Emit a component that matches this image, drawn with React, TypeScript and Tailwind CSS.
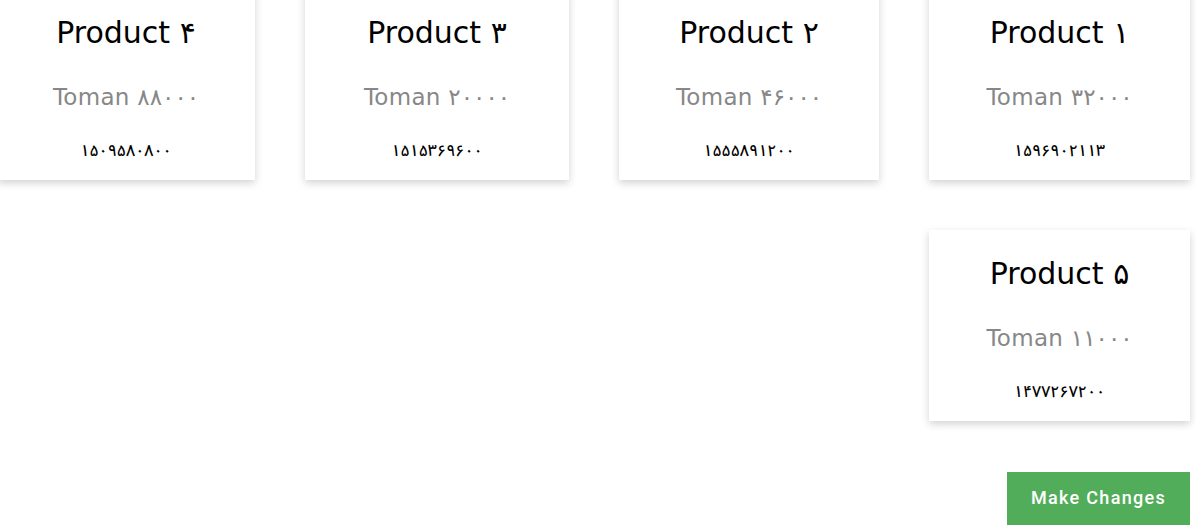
import React from 'react';

type Product = { id: number; title: string; price: string; date: string; w: string };

const row1: Product[] = [
  { id: 1, title: 'Product ۱', price: 'Toman ۳۲۰۰۰', date: '۱۵۹۶۹۰۲۱۱۳', w: 'w-[261px]' },
  { id: 2, title: 'Product ۲', price: 'Toman ۴۶۰۰۰', date: '۱۵۵۵۸۹۱۲۰۰', w: 'w-[260px]' },
  { id: 3, title: 'Product ۳', price: 'Toman ۲۰۰۰۰', date: '۱۵۱۵۳۶۹۶۰۰', w: 'w-[264px]' },
  { id: 4, title: 'Product ۴', price: 'Toman ۸۸۰۰۰', date: '۱۵۰۹۵۸۰۸۰۰', w: 'w-[258px]' },
];

const row2: Product[] = [
  { id: 5, title: 'Product ۵', price: 'Toman ۱۱۰۰۰', date: '۱۴۷۷۲۶۷۲۰۰', w: 'w-[261px]' },
];

const ProductCard = ({ p }: { p: Product }) => (
  <div className={`${p.w} shrink-0 h-[191px] bg-white shadow-[0_3px_8px_rgba(0,0,0,0.18)] flex flex-col items-center pt-[26px]`}>
    <h2 className="text-[30px] leading-[36px] text-black" dir="ltr">{p.title}</h2>
    <div className="mt-[33px] text-[23px] leading-[26px] tracking-[0.3px] text-[#878787]" dir="ltr">{p.price}</div>
    <div className="mt-[31px] text-[16px] leading-[20px] font-medium text-black font-['Noto_Sans_Arabic','DejaVu_Sans',sans-serif]">{p.date}</div>
  </div>
);

export default function App() {
  return (
    <div dir="rtl" className="min-h-screen bg-white overflow-hidden font-['DejaVu_Sans','Noto_Sans_Arabic',sans-serif]">
      <div className="-mt-[11px] pr-[6px] flex flex-col gap-[50px]">
        <div className="flex gap-[50px]">
          {row1.map(p => (
            <ProductCard key={p.id} p={p} />
          ))}
        </div>
        <div className="flex gap-[50px]">
          {row2.map(p => (
            <ProductCard key={p.id} p={p} />
          ))}
        </div>
      </div>
      <div className="pr-[6px] mt-[51px]">
        <button className="w-[183px] h-[53px] bg-[#52ad5a] text-white text-[18px] font-medium tracking-[1.3px] pb-[2px] font-['Roboto',sans-serif]">
          Make Changes
        </button>
      </div>
    </div>
  );
}
